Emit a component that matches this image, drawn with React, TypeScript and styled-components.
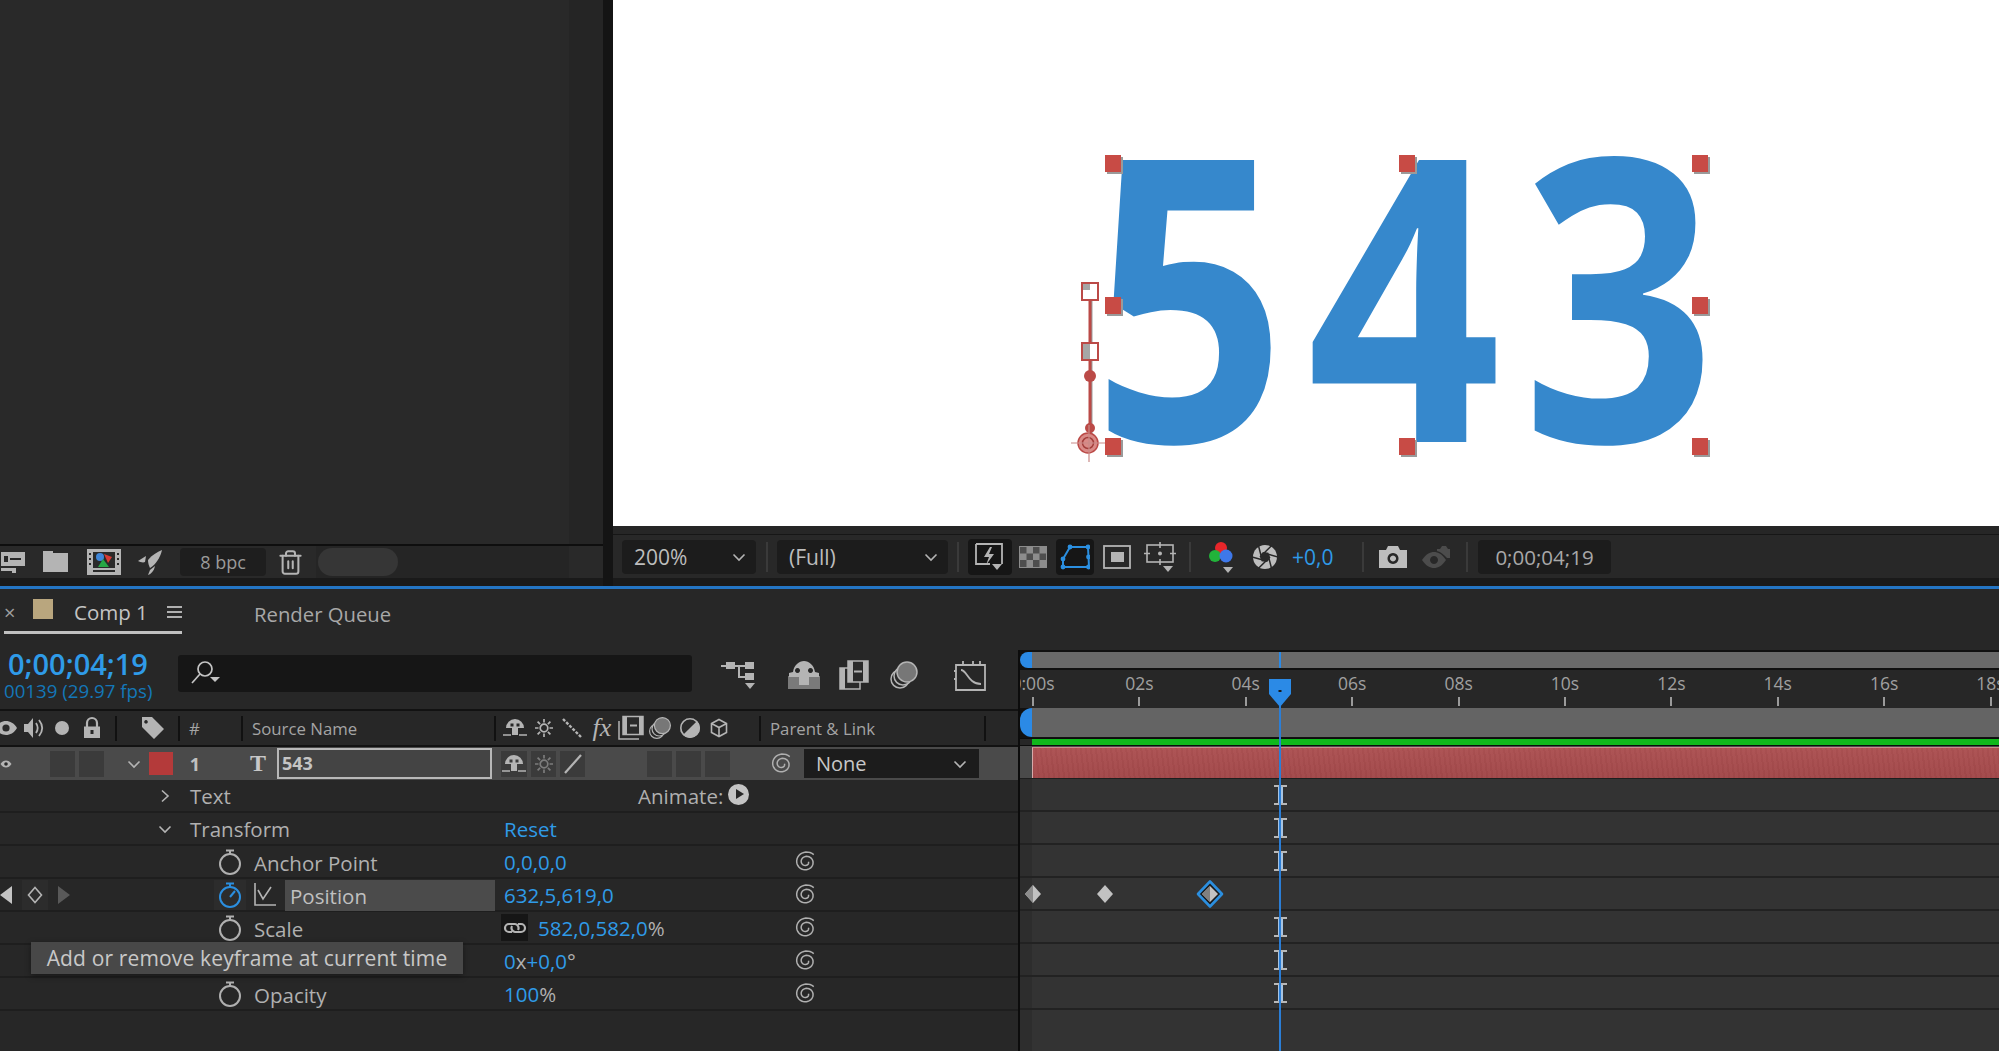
import styled, { createGlobalStyle } from "styled-components";
import { Trash2 } from "lucide-react";

const GlobalStyle = createGlobalStyle`
    html, body {
        margin: 0;
        padding: 0;
        background: #262626;
    }
    * {
        box-sizing: border-box;
    }
`;

const ink = "#b4b4b4";
const blue = "#2f9be8";

// ---------- small drawings ----------

const spiralPath = (() => {
    const pts: string[] = [];
    for (let i = 0; i <= 60; i++) {
        const t = i / 60;
        const angle = -Math.PI / 4 - Math.PI * 3.8 * (1 - t);
        const r = 2.4 + t * 8.6;
        pts.push(`${(12 + r * Math.cos(angle)).toFixed(2)} ${(12 + r * Math.sin(angle) * 0.95).toFixed(2)}`);
    }
    return "M" + pts.join("L");
})();

const Spiral = ({ dim }: { dim?: boolean }) => (
    <svg width="24" height="24" viewBox="0 0 24 24" fill="none" stroke={dim ? "#8d8d8d" : "#b0b0b0"} strokeWidth="1.5">
        <path d={spiralPath} />
    </svg>
);

const bladeLines = Array.from({ length: 6 }, (_, i) => {
    const a = (i * Math.PI) / 3;
    const b = a + (Math.PI * 2) / 3;
    return `M${(13 + 5 * Math.cos(a)).toFixed(2)} ${(13 + 5 * Math.sin(a)).toFixed(2)}L${(13 + 13 * Math.cos(b)).toFixed(2)} ${(13 + 13 * Math.sin(b)).toFixed(2)}`;
}).join("");

const Shutter = () => (
    <svg width="26" height="26" viewBox="0 0 26 26">
        <circle cx="13" cy="13" r="12" fill="#bdbdbd" />
        <path d={bladeLines} stroke="#282828" strokeWidth="1.500" />
        <circle cx="13" cy="13" r="4.800" fill="#282828" />
    </svg>
);

const Stopwatch = ({ active }: { active?: boolean }) => {
    const c = active ? "#2b8fe0" : "#b0b0b0";
    return (
        <svg width="26" height="28" viewBox="0 0 26 28" fill="none" stroke={c} strokeWidth="2">
            <circle cx="13" cy="16" r="10" />
            <path d="M9 2.500h8M13 2.500v4" />
            {active && <path d="M13 16l5-6" />}
        </svg>
    );
};

const GraphGlyph = () => (
    <svg width="24" height="26" viewBox="0 0 24 26" fill="none" stroke={ink} strokeWidth="1.600">
        <path d="M2 1v22h21" />
        <path d="M5 8l5 9 8-12" />
    </svg>
);

const Chevron = ({ dir = "down", size = 14 }: { dir?: "down" | "right"; size?: number }) => (
    <svg width={size} height={size} viewBox="0 0 14 14" fill="none" stroke={ink} strokeWidth="1.600">
        {dir === "down" ? <path d="M1.500 4.500L7 10l5.500-5.500" /> : <path d="M4 1.500L10 7l-6 5.500" />}
    </svg>
);

const Eye = () => (
    <svg width="24" height="16" viewBox="0 0 24 16">
        <path d="M1 8c3-5 7-7 11-7s8 2 11 7c-3 5-7 7-11 7S4 13 1 8z" fill={ink} />
        <circle cx="12" cy="8" r="3.600" fill="#2a2a2a" />
    </svg>
);

const Speaker = () => (
    <svg width="24" height="24" viewBox="0 0 24 24" fill="none">
        <path d="M2 8h4l5-6v20l-5-6H2z" fill={ink} />
        <path d="M14 7c2 3 2 7 0 10M17 4c4 5 4 11 0 16" stroke={ink} strokeWidth="1.800" />
    </svg>
);

const Lock = () => (
    <svg width="20" height="24" viewBox="0 0 20 24" fill="none">
        <path d="M5 11V7a5 5 0 0 1 10 0v4" stroke={ink} strokeWidth="2.200" />
        <path fillRule="evenodd" d="M2 10.500h16V22H2zM8.500 14v4h3v-4z" fill={ink} />
    </svg>
);

const Tag = () => (
    <svg width="26" height="26" viewBox="0 0 26 26">
        <path fillRule="evenodd" d="M2 2h10l12 12-10 10L2 12zM6 5a1.800 1.800 0 1 0 .01 0z" fill={ink} />
    </svg>
);

const Shy = () => (
    <svg width="26" height="22" viewBox="0 0 26 22">
        <path fillRule="evenodd" d="M4 11a9 9 0 0 1 18 0h-6v7h-6v-7zM8.500 6.500h3v3h-3zM14.500 6.500h3v3h-3z" fill={ink} />
        <path d="M1 18h8M17 18h8" stroke={ink} strokeWidth="1.600" />
    </svg>
);

const Sun = ({ dim }: { dim?: boolean }) => (
    <svg width="20" height="20" viewBox="0 0 20 20" fill="none" stroke={dim ? "#7c7c7c" : ink} strokeWidth="1.700">
        <circle cx="10" cy="10" r="3.800" />
        <path d="M10 1v3.500M10 15.500V19M1 10h3.500M15.500 10H19M3.600 3.600l2.500 2.500M13.900 13.900l2.500 2.500M3.600 16.400l2.500-2.500M13.900 6.100l2.500-2.500" />
    </svg>
);

const DottedSlash = () => (
    <svg width="22" height="22" viewBox="0 0 22 22" fill="none" stroke={ink} strokeWidth="2.400">
        <path d="M2 2l18 18" strokeDasharray="3 1.500" />
    </svg>
);

const Slash = () => (
    <svg width="22" height="22" viewBox="0 0 22 22" fill="none" stroke={ink} strokeWidth="2.200">
        <path d="M3 20L19 2" />
    </svg>
);

const Film = () => (
    <svg width="26" height="26" viewBox="0 0 26 26" fill="none" stroke={ink} strokeWidth="1.500">
        <path d="M1 6v18h20" />
        <rect x="5" y="1.500" width="20" height="18" fill="#2a2a2a" />
        <path d="M5 1.500h4v18H5zM21 1.500h4v18h-4z" fill={ink} stroke="none" />
        <path d="M12 10.500h7" strokeWidth="2" />
    </svg>
);

const Blur = () => (
    <svg width="30" height="30" viewBox="0 0 30 30" fill="none" stroke={ink} strokeWidth="1.500">
        <circle cx="11" cy="19" r="9" />
        <circle cx="14" cy="16" r="9" fill="#2a2a2a" />
        <circle cx="18" cy="12" r="10" fill="#777" />
    </svg>
);

const Adjust = () => (
    <svg width="22" height="22" viewBox="0 0 22 22">
        <circle cx="11" cy="11" r="10" fill={ink} />
        <path d="M3.900 18.100A10 10 0 0 1 18.100 3.900z" fill="#2a2a2a" />
        <circle cx="11" cy="11" r="9.200" fill="none" stroke={ink} strokeWidth="1.600" />
    </svg>
);

const Cube = () => (
    <svg width="20" height="20" viewBox="0 0 20 20" fill="none" stroke={ink} strokeWidth="1.600">
        <path d="M10 1.500l7.500 4v9l-7.500 4-7.500-4v-9zM2.500 5.500l7.500 4 7.500-4M10 9.500v9" />
    </svg>
);

const LinkChain = () => (
    <svg width="24" height="14" viewBox="0 0 24 14" fill="none" stroke={ink} strokeWidth="2.200">
        <path d="M9 11H6a4 4 0 0 1 0-8h6a4 4 0 0 1 3 6" />
        <path d="M15 3h3a4 4 0 0 1 0 8h-6a4 4 0 0 1-3-6" />
    </svg>
);

const Diamond = ({ half }: { half?: boolean }) => (
    <svg width="18" height="20" viewBox="0 0 18 20">
        <path d="M9 1l8 9-8 9-8-9z" fill="#c2c2c2" />
        {half && <path d="M9 1L1 10l8 9z" fill="#8c8c8c" />}
    </svg>
);

const SelectedKey = () => (
    <svg width="30" height="30" viewBox="0 0 30 30">
        <path d="M15 2.500L27 15 15 27.500 3 15z" fill="#1b1b1b" stroke="#2b8fe0" strokeWidth="2.600" strokeLinejoin="round" />
        <path d="M15 7l8 8-8 8-8-8z" fill="#c2c2c2" />
        <path d="M15 7l-8 8 8 8z" fill="#808080" />
    </svg>
);

const FastPreview = () => (
    <svg width="32" height="30" viewBox="0 0 32 30" fill="none">
        <path d="M2 2h26v20M2 2v20h14" stroke={ink} strokeWidth="1.800" />
        <path d="M16 5l-6 10h5l-3 8 8-11h-5l3-7z" fill={ink} />
        <path d="M18 22h10l-5 6z" fill={ink} />
    </svg>
);

const Checker = () => (
    <svg width="28" height="22" viewBox="0 0 28 22">
        <rect width="28" height="22" fill="#8c8c8c" />
        <path d="M1 1h6.500v6.500H1zM14 1h6.500v6.500H14zM7.500 7.500H14V14H7.500zM20.500 7.500H27V14h-6.500zM1 14h6.500v7H1zM14 14h6.500v7H14z" fill="#4e4e4e" />
    </svg>
);

const Region = () => (
    <svg width="30" height="26" viewBox="0 0 30 26" fill="none" stroke="#2b8fe0" strokeWidth="2">
        <path d="M10 3h18l1 20H3v-8z" />
        <g fill="#2b8fe0" stroke="none">
            <circle cx="10" cy="3" r="2.400" />
            <circle cx="28" cy="3" r="2.400" />
            <circle cx="28.500" cy="13" r="2.400" />
            <circle cx="28.500" cy="23" r="2.400" />
            <circle cx="3" cy="23" r="2.400" />
            <circle cx="3" cy="15" r="2.400" />
        </g>
    </svg>
);

const MaskFrame = () => (
    <svg width="28" height="24" viewBox="0 0 28 24">
        <rect x="1" y="1" width="26" height="22" fill="none" stroke={ink} strokeWidth="1.800" />
        <rect x="8" y="7" width="13" height="10" fill={ink} />
    </svg>
);

const GuideFrame = () => (
    <svg width="32" height="30" viewBox="0 0 32 30" fill="none" stroke={ink} strokeWidth="1.600">
        <rect x="3" y="3" width="26" height="17" />
        <path d="M16 0v6M16 17v6M0 11.500h6M26 11.500h6" />
        <circle cx="16" cy="11.500" r="1.200" fill={ink} />
        <path d="M19 24h10l-5 6z" fill={ink} stroke="none" />
    </svg>
);

const RgbDots = () => (
    <svg width="28" height="32" viewBox="0 0 28 32">
        <circle cx="13" cy="7" r="6" fill="#e8262a" />
        <circle cx="7" cy="15" r="6" fill="#22b33a" />
        <circle cx="18" cy="15" r="6.500" fill="#3e78ea" />
        <path d="M15 26h10l-5 6z" fill={ink} />
    </svg>
);

const CameraGlyph = () => (
    <svg width="30" height="24" viewBox="0 0 30 24">
        <path fillRule="evenodd" d="M1 5h7l2-4h10l2 4h7v18H1zM15 8a5.500 5.500 0 1 0 .01 0zM15 10.500a3 3 0 1 1-.01 0z" fill="#bdbdbd" />
    </svg>
);

const SnapshotEye = () => (
    <svg width="30" height="26" viewBox="0 0 30 26" fill="#4c4c4c">
        <path fillRule="evenodd" d="M1 16c4-6 8-8 12-8s8 2 12 8c-4 6-8 8-12 8S5 22 1 16zM13 12a4 4 0 1 0 .01 0z" />
        <path fillRule="evenodd" d="M16 5h3l2-3h4l2 3h2v9h-3c-3-3-6-6-10-7z" />
    </svg>
);

const Flowchart = () => (
    <svg width="36" height="32" viewBox="0 0 36 32" fill={ink}>
        <rect x="0" y="6" width="5" height="2" />
        <rect x="5" y="3" width="9" height="7" />
        <rect x="24" y="3" width="9" height="7" />
        <rect x="24" y="14" width="9" height="7" />
        <path d="M14 6h10v2h-5v9h5v2h-7V8h-3z" />
        <path d="M24 24h10l-5 6z" />
    </svg>
);

const ShyLayer = () => (
    <svg width="34" height="30" viewBox="0 0 34 30">
        <rect x="1" y="16" width="32" height="13" fill="#7a7a7a" />
        <path fillRule="evenodd" d="M6 12c1-7 6-11 11-11s10 4 11 11l4 1v4H22v8h-10v-8H2v-4zM10.500 8a2.500 2.500 0 1 0 .01 0zM23.500 8a2.500 2.500 0 1 0 .01 0z" fill={ink} />
    </svg>
);

const FilmStack = () => (
    <svg width="30" height="30" viewBox="0 0 30 30" fill="none" stroke={ink} strokeWidth="1.500">
        <rect x="1" y="8" width="20" height="21" fill="#2a2a2a" />
        <path d="M1 8h5v21H1z" fill={ink} stroke="none" />
        <rect x="9" y="1" width="20" height="21" fill="#2a2a2a" />
        <path d="M9 1h5v21H9zM24 1h5v21h-5z" fill={ink} stroke="none" />
        <path d="M15 11.500h8" strokeWidth="2" />
    </svg>
);

const GraphEditor = () => (
    <svg width="32" height="32" viewBox="0 0 32 32" fill="none" stroke={ink} strokeWidth="1.800">
        <path d="M2 6h29v25H2zM9 2v4M19 2v4M26 2v4M0 12h2M0 20h2" />
        <path d="M7 11c6 0 7 14 20 14" />
    </svg>
);

const Interpret = () => (
    <svg width="24" height="24" viewBox="0 0 24 24" fill={ink}>
        <path fillRule="evenodd" d="M0 2h24v14H0zM3 6v6h4V6zM9 8v2h11V8z" />
        <path d="M0 18h15v5h-4v-2H0z" />
    </svg>
);

const Folder = () => (
    <svg width="27" height="22" viewBox="0 0 27 22" fill={ink}>
        <path d="M1 0h10v2h15v19H1z" />
    </svg>
);

const CompIcon = () => (
    <svg width="34" height="26" viewBox="0 0 34 26">
        <rect width="34" height="26" fill={ink} />
        <rect x="6" y="3" width="22" height="16" fill="#2a2a2a" />
        <path d="M2 4h2v2H2zM2 9h2v2H2zM2 14h2v2H2zM30 4h2v2h-2zM30 9h2v2h-2zM30 14h2v2h-2z" fill="#2a2a2a" />
        <rect x="6" y="21" width="22" height="2" fill="#2a2a2a" />
        <circle cx="13" cy="8" r="4" fill="#3f86d8" />
        <path d="M17 5l8 3-4 6z" fill="#d93a34" />
        <path d="M16 10l6 8H11z" fill="#28a745" />
    </svg>
);

const Rocket = () => (
    <svg width="26" height="26" viewBox="0 0 26 26" fill={ink}>
        <path d="M25 1c-2 8-6 14-12 18-1-2-2-5-2-8 4-5 9-8 14-10z" />
        <path d="M9 7L1 12c2 1 5 2 7 1z" />
        <path d="M13 21l-2 5c3-1 6-4 7-9z" />
    </svg>
);

const SearchGlyph = () => (
    <svg width="34" height="28" viewBox="0 0 34 28" fill="none" stroke="#c4c4c4" strokeWidth="1.700">
        <circle cx="15" cy="10" r="7" />
        <path d="M10 15L2 24" />
        <path d="M20 18h10l-5 5z" fill="#c4c4c4" stroke="none" />
    </svg>
);

// ---------- app ----------

const rulerLabels = ["0:00s", "02s", "04s", "06s", "08s", "10s", "12s", "14s", "16s", "18s"];

export default function App() {
    return (
        <Page>
            <GlobalStyle />
            <TopArea>
                <ProjectPanel>
                    <ProjectBody>
                        <ProjectList />
                        <ProjectSide />
                    </ProjectBody>
                    <ProjectFooter>
                        <Slot $w={26}><Interpret /></Slot>
                        <Slot $w={58}><Folder /></Slot>
                        <Slot $w={39}><CompIcon /></Slot>
                        <Slot $w={54}><Rocket /></Slot>
                        <BpcBox>8 bpc</BpcBox>
                        <Slot $w={48}><Trash2 size={27} color={ink} strokeWidth={1.8} /></Slot>
                        <FooterFill><Pill /></FooterFill>
                        <FooterEnd />
                    </ProjectFooter>
                    <Shelf />
                </ProjectPanel>
                <Gutter />
                <Viewer>
                    <Canvas>
                        <BigNumber>543</BigNumber>
                        <CanvasMarks viewBox="0 0 1386 526" width="1386" height="526">
                            {[492, 786, 1079].flatMap((x) =>
                                [155, 297, 438].map((y) =>
                                    x === 786 && y === 297 ? null : (
                                        <g key={`${x}-${y}`}>
                                            <rect x={x + 2} y={y + 2} width="16" height="17" fill="#9a9a9a" />
                                            <rect x={x} y={y} width="16" height="17" fill="#c84b45" />
                                        </g>
                                    )
                                )
                            )}
                            <path d="M478 290V440" stroke="#9c9c9c" strokeWidth="3" />
                            <path d="M477 290V440" stroke="#bb4a47" strokeWidth="3" />
                            <rect x="469" y="283" width="16" height="17" fill="#fff" stroke="#bb4a47" strokeWidth="2" />
                            <rect x="470" y="284" width="7" height="6" fill="#a6a6a6" />
                            <rect x="469" y="343" width="16" height="17" fill="#fff" stroke="#bb4a47" strokeWidth="2" />
                            <rect x="470" y="344" width="7" height="15" fill="#a6a6a6" />
                            <circle cx="477" cy="376" r="6" fill="#bb4a47" />
                            <circle cx="477" cy="428" r="5" fill="#bb4a47" />
                            <circle cx="475" cy="443" r="10" fill="#d98a87" stroke="#bb4a47" strokeWidth="1.500" />
                            <circle cx="475" cy="443" r="5.500" fill="none" stroke="#a33f3c" strokeWidth="1.500" />
                            <path d="M458 443h34M476 425v37" stroke="#c98a88" strokeWidth="1.200" />
                        </CanvasMarks>
                    </Canvas>
                    <ViewerStrip />
                    <ViewerBar>
                        <Select $w={134} $ml={9}>200%<Chevron /></Select>
                        <Slot $w={21}><Sep /></Slot>
                        <Select $w={171}>(Full)<Chevron /></Select>
                        <Slot $w={20}><Sep /></Slot>
                        <ToggleButton $w={44}><FastPreview /></ToggleButton>
                        <Slot $w={41}><Checker /></Slot>
                        <ToggleButton $w={38} $ml={3}><Region /></ToggleButton>
                        <Slot $w={45}><MaskFrame /></Slot>
                        <Slot $w={42}><GuideFrame /></Slot>
                        <Slot $w={18}><Sep /></Slot>
                        <Slot $w={46}><RgbDots /></Slot>
                        <Slot $w={40}><Shutter /></Slot>
                        <Exposure>+0,0</Exposure>
                        <Slot $w={16}><Sep /></Slot>
                        <Slot $w={44}><CameraGlyph /></Slot>
                        <Slot $w={41}><SnapshotEye /></Slot>
                        <Slot $w={22}><Sep /></Slot>
                        <TimeBox>0;00;04;19</TimeBox>
                    </ViewerBar>
                    <Shelf />
                </Viewer>
            </TopArea>
            <BlueRule />
            <TimelinePanel>
                <TabBar>
                    <ActiveTab>
                        <CloseMark>×</CloseMark>
                        <Swatch />
                        <TabTitle>Comp 1</TabTitle>
                        <Burger />
                    </ActiveTab>
                    <IdleTab>Render Queue</IdleTab>
                </TabBar>
                <TimelineBody>
                    <Outline>
                        <ControlsRow>
                            <TimeBlock>
                                <Timecode>0;00;04;19</Timecode>
                                <FrameCount>00139 (29.97 fps)</FrameCount>
                            </TimeBlock>
                            <SearchField><SearchGlyph /></SearchField>
                            <ToolSlots>
                                <Slot $w={93}><Flowchart /></Slot>
                                <Slot $w={38}><ShyLayer /></Slot>
                                <Slot $w={62}><FilmStack /></Slot>
                                <Slot $w={38}><Blur /></Slot>
                                <Slot $w={94}><GraphEditor /></Slot>
                            </ToolSlots>
                        </ControlsRow>
                        <HeaderRow>
                            <HeaderGroup $w={123} $ml={-8}>
                                <Slot $w={28}><Eye /></Slot>
                                <Slot $w={28}><Speaker /></Slot>
                                <Slot $w={28}><RoundDot /></Slot>
                                <Slot $w={31}><Lock /></Slot>
                            </HeaderGroup>
                            <HeaderGroup $w={63} $rule><Slot $w={72}><Tag /></Slot></HeaderGroup>
                            <HeaderGroup $w={63} $rule><HeaderText>#</HeaderText></HeaderGroup>
                            <HeaderGroup $w={253} $rule><HeaderText>Source Name</HeaderText></HeaderGroup>
                            <HeaderGroup $w={265} $rule>
                                <Slot $w={38}><Shy /></Slot>
                                <Slot $w={20}><Sun /></Slot>
                                <Slot $w={36}><DottedSlash /></Slot>
                                <FxMark>fx</FxMark>
                                <Slot $w={34}><Film /></Slot>
                                <Slot $w={24}><Blur /></Slot>
                                <Slot $w={36}><Adjust /></Slot>
                                <Slot $w={22}><Cube /></Slot>
                            </HeaderGroup>
                            <HeaderGroup $w={227} $rule $endRule><HeaderText>Parent &amp; Link</HeaderText></HeaderGroup>
                        </HeaderRow>
                        <LayerRow>
                            <LayerEye><Eye /></LayerEye>
                            <CellGroup $ml={38}><SwitchCell $w={25} /><SwitchCell $w={25} /></CellGroup>
                            <Slot $w={25} $ml={17}><Chevron /></Slot>
                            <LabelChip $ml={3} />
                            <LayerNumber>1</LayerNumber>
                            <TypeMark>T</TypeMark>
                            <NameBox>543</NameBox>
                            <CellGroup $ml={9}>
                                <SwitchCell $w={26}><Shy /></SwitchCell>
                                <SwitchCell $w={25}><Sun dim /></SwitchCell>
                                <SwitchCell $w={25}><Slash /></SwitchCell>
                            </CellGroup>
                            <CellGroup $ml={62}>
                                <SwitchCell $w={25} /><SwitchCell $w={25} /><SwitchCell $w={25} />
                            </CellGroup>
                            <Slot $w={24} $ml={40}><Spiral /></Slot>
                            <ParentSelect>None<Chevron /></ParentSelect>
                        </LayerRow>
                        <GroupRow>
                            <Slot $w={24} $ml={153}><Chevron dir="right" /></Slot>
                            <RowLabel $w={448} $ml={13}>Text</RowLabel>
                            <RowLabel>Animate:</RowLabel>
                            <PlayBadge />
                        </GroupRow>
                        <GroupRow>
                            <Slot $w={24} $ml={153}><Chevron /></Slot>
                            <RowLabel $w={314} $ml={13}>Transform</RowLabel>
                            <BlueValue>Reset</BlueValue>
                        </GroupRow>
                        <PropertyRow>
                            <Blank />
                            <Slot $w={36}><Stopwatch /></Slot>
                            <PropName>Anchor Point</PropName>
                            <PropValue><BlueValue>0,0,0,0</BlueValue></PropValue>
                            <Slot $w={32}><Spiral /></Slot>
                        </PropertyRow>
                        <PropertyRow>
                            <KeyNav>
                                <NavArrow viewBox="0 0 12 18" width="12" height="18"><path d="M12 0v18L0 9z" fill="#c4c4c4" /></NavArrow>
                                <KeyButton>
                                    <svg width="16" height="18" viewBox="0 0 16 18" fill="none" stroke={ink} strokeWidth="1.600"><path d="M8 1.500L14.500 9 8 16.500 1.500 9z" /></svg>
                                </KeyButton>
                                <NavArrow viewBox="0 0 12 18" width="12" height="18"><path d="M0 0v18l12-9z" fill="#595959" /></NavArrow>
                            </KeyNav>
                            <StopwatchBox><Stopwatch active /></StopwatchBox>
                            <PropName $graph>
                                <GraphGlyph />
                                <HighlightName>Position</HighlightName>
                            </PropName>
                            <PropValue><BlueValue>632,5,619,0</BlueValue></PropValue>
                            <Slot $w={32}><Spiral /></Slot>
                        </PropertyRow>
                        <PropertyRow>
                            <Blank />
                            <Slot $w={36}><Stopwatch /></Slot>
                            <PropName>Scale</PropName>
                            <PropValue $linked>
                                <LinkBox><LinkChain /></LinkBox>
                                <BlueValue>582,0,582,0</BlueValue><Unit>%</Unit>
                            </PropValue>
                            <Slot $w={32}><Spiral /></Slot>
                        </PropertyRow>
                        <PropertyRow>
                            <Blank />
                            <Slot $w={36}><Stopwatch /></Slot>
                            <PropName />
                            <PropValue><BlueValue>0</BlueValue><Unit>x</Unit><BlueValue>+0,0</BlueValue><Unit>°</Unit></PropValue>
                            <Slot $w={32}><Spiral /></Slot>
                        </PropertyRow>
                        <PropertyRow>
                            <Blank />
                            <Slot $w={36}><Stopwatch /></Slot>
                            <PropName>Opacity</PropName>
                            <PropValue><BlueValue>100</BlueValue><Unit>%</Unit></PropValue>
                            <Slot $w={32}><Spiral /></Slot>
                        </PropertyRow>
                        <Tooltip>Add or remove keyframe at current time</Tooltip>
                    </Outline>
                    <PanelDivider />
                    <Graph>
                        <NavRow>
                            <BlueCap />
                            <NavTrack />
                        </NavRow>
                        <Ruler>
                            {rulerLabels.map((label) => (
                                <RulerCell key={label}>
                                    <span>{label}</span>
                                    <RulerTick />
                                </RulerCell>
                            ))}
                        </Ruler>
                        <WorkRow>
                            <BlueCap />
                            <WorkTrack />
                        </WorkRow>
                        <GreenRow />
                        <LayerTrack><RedBar /></LayerTrack>
                        <Track><IBeam /></Track>
                        <Track><IBeam /></Track>
                        <Track><IBeam /></Track>
                        <Track>
                            <KeyMark $x={13}><Diamond half /></KeyMark>
                            <KeyMark $x={85}><Diamond /></KeyMark>
                            <KeyMark $x={190}><SelectedKey /></KeyMark>
                        </Track>
                        <Track><IBeam /></Track>
                        <Track><IBeam /></Track>
                        <Track><IBeam /></Track>
                        <GraphRest />
                        <NavNeedle />
                        <PlayheadLine />
                        <PlayheadHandle viewBox="0 0 22 28" width="22" height="28">
                            <path d="M0 0h22v15L11 28 0 15z" fill="#2b8ae6" />
                            <rect x="9.500" y="11" width="3" height="2" fill="#1a1a1a" />
                        </PlayheadHandle>
                    </Graph>
                </TimelineBody>
            </TimelinePanel>
        </Page>
    );
}

// ---------- shared ----------

const Page = styled.div`
    width: 1999px;
    height: 1051px;
    display: flex;
    flex-direction: column;
    overflow: hidden;
    background: #262626;
    color: #a9a9a9;
    font-family: "Open Sans", "Noto Sans", sans-serif;
    font-size: 20px;
`;

const Slot = styled.div<{ $w: number; $ml?: number }>`
    flex: none;
    width: ${(p) => p.$w}px;
    margin-left: ${(p) => p.$ml ?? 0}px;
    display: flex;
    align-items: center;
    justify-content: center;
`;

const Sep = styled.div`
    width: 2px;
    height: 30px;
    background: #3a3a3a;
`;

const Shelf = styled.div`
    height: 8px;
    flex: none;
    background: #1a1a1a;
`;

// ---------- top area ----------

const TopArea = styled.div`
    height: 586px;
    flex: none;
    display: flex;
`;

const ProjectPanel = styled.div`
    width: 603px;
    flex: none;
    display: flex;
    flex-direction: column;
`;

const ProjectBody = styled.div`
    flex: 1;
    display: flex;
    border-bottom: 2px solid #0e0e0e;
`;

const ProjectList = styled.div`
    width: 569px;
    background: #292929;
`;

const ProjectSide = styled.div`
    flex: 1;
    background: #252525;
`;

const ProjectFooter = styled.div`
    height: 32px;
    flex: none;
    display: flex;
    align-items: center;
    background: #292929;
    overflow: hidden;
`;

const BpcBox = styled.div`
    flex: none;
    width: 86px;
    height: 28px;
    margin-left: 3px;
    border-radius: 4px;
    background: #1e1e1e;
    color: #9a9a9a;
    font-size: 18px;
    display: flex;
    align-items: center;
    justify-content: center;
`;

const FooterFill = styled.div`
    flex: none;
    width: 253px;
    margin-left: 2px;
    height: 100%;
    padding: 2px;
    background: #252525;
`;

const Pill = styled.div`
    width: 80px;
    height: 28px;
    border-radius: 14px;
    background: #363636;
`;

const FooterEnd = styled.div`
    flex: 1;
    height: 100%;
    background: #292929;
`;

const Gutter = styled.div`
    width: 10px;
    flex: none;
    background: #141414;
`;

const Viewer = styled.div`
    flex: 1;
    display: flex;
    flex-direction: column;
`;

const Canvas = styled.div`
    height: 526px;
    flex: none;
    position: relative;
    overflow: hidden;
    background: #fff;
`;

const BigNumber = styled.div`
    position: absolute;
    left: 479px;
    top: 92px;
    font-family: "Open Sans", sans-serif;
    font-weight: 700;
    font-size: 395px;
    line-height: 1;
    letter-spacing: 24px;
    color: #3688cc;
    transform: scaleX(0.86);
    transform-origin: left top;
`;

const CanvasMarks = styled.svg`
    position: absolute;
    left: 0;
    top: 0;
`;

const ViewerStrip = styled.div`
    height: 9px;
    flex: none;
    background: #262626;
    border-bottom: 1px solid #161616;
`;

const ViewerBar = styled.div`
    flex: 1;
    display: flex;
    align-items: center;
    background: #282828;
`;

const Select = styled.div<{ $w: number; $ml?: number }>`
    flex: none;
    width: ${(p) => p.$w}px;
    margin-left: ${(p) => p.$ml ?? 0}px;
    height: 34px;
    padding: 0 10px 0 12px;
    border-radius: 4px;
    background: #1c1c1c;
    color: #bdbdbd;
    font-size: 21px;
    display: flex;
    align-items: center;
    justify-content: space-between;
`;

const ToggleButton = styled.div<{ $w: number; $ml?: number }>`
    flex: none;
    width: ${(p) => p.$w}px;
    margin-left: ${(p) => p.$ml ?? 0}px;
    height: 36px;
    border-radius: 4px;
    background: #161616;
    display: flex;
    align-items: center;
    justify-content: center;
`;

const Exposure = styled.div`
    flex: none;
    width: 70px;
    padding-left: 7px;
    color: ${blue};
    font-size: 21px;
`;

const TimeBox = styled.div`
    flex: none;
    width: 133px;
    height: 34px;
    border-radius: 4px;
    background: #1c1c1c;
    color: #a8a8a8;
    font-size: 20.5px;
    display: flex;
    align-items: center;
    justify-content: center;
`;

const BlueRule = styled.div`
    height: 3px;
    flex: none;
    background: #2475c4;
`;

// ---------- timeline ----------

const TimelinePanel = styled.div`
    flex: 1;
    display: flex;
    flex-direction: column;
    background: #272727;
    min-height: 0;
`;

const TabBar = styled.div`
    height: 61px;
    flex: none;
    display: flex;
    align-items: flex-start;
`;

const ActiveTab = styled.div`
    width: 178px;
    height: 44px;
    margin: 1px 0 0 4px;
    padding-top: 3px;
    display: flex;
    align-items: center;
    border-bottom: 3px solid #c0c0c0;
`;

const CloseMark = styled.span`
    width: 29px;
    color: #a0a0a0;
    font-size: 20px;
    text-align: left;
`;

const Swatch = styled.div`
    width: 20px;
    height: 20px;
    background: #b9a67e;
    margin-top: -6px;
`;

const TabTitle = styled.span`
    margin-left: 21px;
    width: 93px;
    color: #c4c4c4;
    font-size: 20.5px;
`;

const Burger = styled.div`
    width: 15px;
    height: 12px;
    border-top: 2px solid #b0b0b0;
    border-bottom: 2px solid #b0b0b0;
    position: relative;

    &::after {
        content: "";
        position: absolute;
        left: 0;
        right: 0;
        top: 3px;
        height: 2px;
        background: #b0b0b0;
    }
`;

const IdleTab = styled.div`
    margin: 11px 0 0 72px;
    color: #a8a8a8;
    font-size: 20.3px;
`;

const TimelineBody = styled.div`
    flex: 1;
    display: flex;
    min-height: 0;
`;

const Outline = styled.div`
    width: 1018px;
    flex: none;
    position: relative;
    display: flex;
    flex-direction: column;
    overflow: hidden;
`;

const PanelDivider = styled.div`
    width: 2px;
    flex: none;
    background: #0c0c0c;
`;

const ControlsRow = styled.div`
    height: 59px;
    flex: none;
    display: flex;
    align-items: flex-start;
`;

const TimeBlock = styled.div`
    width: 178px;
    flex: none;
    padding: 0 0 0 4px;
    display: flex;
    flex-direction: column;
`;

const Timecode = styled.div`
    margin-left: 4px;
    color: ${blue};
    font-size: 29px;
    font-weight: 600;
    line-height: 28px;
`;

const FrameCount = styled.div`
    color: #1477b8;
    font-size: 18.7px;
    line-height: 25px;
`;

const SearchField = styled.div`
    width: 514px;
    flex: none;
    height: 37px;
    margin-top: 5px;
    padding: 4px 0 0 12px;
    border-radius: 3px;
    background: #161616;
`;

const ToolSlots = styled.div`
    flex: none;
    height: 50px;
    display: flex;
    align-items: center;
`;

const HeaderRow = styled.div`
    height: 38px;
    flex: none;
    display: flex;
    align-items: center;
    border-top: 2px solid #121212;
    border-bottom: 2px solid #121212;
`;

const HeaderGroup = styled.div<{ $w: number; $ml?: number; $rule?: boolean; $endRule?: boolean }>`
    flex: none;
    width: ${(p) => p.$w}px;
    margin-left: ${(p) => p.$ml ?? 0}px;
    height: 25px;
    display: flex;
    align-items: center;
    border-left: ${(p) => (p.$rule ? "2px solid #111" : "none")};
    border-right: ${(p) => (p.$endRule ? "2px solid #111" : "none")};
`;

const HeaderText = styled.span`
    padding-left: 9px;
    color: #a4a4a4;
    font-size: 16.8px;
`;

const RoundDot = styled.div`
    width: 14px;
    height: 14px;
    border-radius: 50%;
    background: ${ink};
`;

const FxMark = styled.span`
    flex: none;
    width: 24px;
    text-align: center;
    font-family: "Liberation Serif", serif;
    font-style: italic;
    font-size: 26px;
    color: ${ink};
`;

const LayerRow = styled.div`
    height: 33px;
    flex: none;
    display: flex;
    align-items: center;
    background: #4a4a4a;
`;

const LayerEye = styled.div`
    flex: none;
    width: 12px;
    overflow: hidden;
    display: flex;
    justify-content: flex-end;
`;

const CellGroup = styled.div<{ $ml?: number }>`
    flex: none;
    margin-left: ${(p) => p.$ml ?? 0}px;
    display: flex;
    gap: 4px;
`;

const SwitchCell = styled.div<{ $w: number }>`
    width: ${(p) => p.$w}px;
    height: 26px;
    background: #3b3b3b;
    display: flex;
    align-items: center;
    justify-content: center;
`;

const LabelChip = styled.div<{ $ml?: number }>`
    flex: none;
    margin-left: ${(p) => p.$ml ?? 0}px;
    width: 24px;
    height: 23px;
    background: #b43a3a;
`;

const LayerNumber = styled.div`
    flex: none;
    width: 44px;
    text-align: center;
    color: #c0c0c0;
    font-weight: 700;
    font-size: 18px;
`;

const TypeMark = styled.div`
    flex: none;
    width: 60px;
    padding-right: 11px;
    text-align: right;
    font-family: "Liberation Serif", serif;
    font-weight: 700;
    font-size: 24px;
    color: #c8c8c8;
`;

const NameBox = styled.div`
    flex: none;
    width: 215px;
    height: 31px;
    padding-left: 3px;
    border: 2px solid #b8b8b8;
    background: #444;
    color: #c4c4c4;
    font-weight: 700;
    font-size: 18px;
    line-height: 26px;
`;

const ParentSelect = styled.div`
    flex: none;
    width: 175px;
    height: 29px;
    padding: 0 12px;
    margin-left: 10px;
    background: #1c1c1c;
    color: #c8c8c8;
    font-size: 20px;
    display: flex;
    align-items: center;
    justify-content: space-between;
`;

const GroupRow = styled.div`
    height: 33px;
    flex: none;
    display: flex;
    align-items: center;
    border-bottom: 2px solid #1e1e1e;
`;

const RowLabel = styled.div<{ $w?: number; $ml?: number }>`
    flex: none;
    width: ${(p) => (p.$w ? `${p.$w}px` : "auto")};
    margin-left: ${(p) => p.$ml ?? 0}px;
    padding-top: 1px;
    color: #b0b0b0;
    font-size: 20.5px;
`;

const PlayBadge = styled.div`
    flex: none;
    width: 21px;
    height: 21px;
    margin: -2px 0 0 5px;
    border-radius: 50%;
    background: #c4c4c4;
    position: relative;

    &::after {
        content: "";
        position: absolute;
        left: 8px;
        top: 5px;
        border-left: 8px solid #272727;
        border-top: 5.5px solid transparent;
        border-bottom: 5.5px solid transparent;
    }
`;

const BlueValue = styled.span`
    color: ${blue};
    font-size: 20.5px;
`;

const Unit = styled.span`
    color: #b0b0b0;
    font-size: 20.5px;
`;

const PropertyRow = styled.div`
    height: 33px;
    flex: none;
    display: grid;
    grid-template-columns: 212px 36px 256px 286px 32px;
    align-items: center;
    border-bottom: 2px solid #1e1e1e;
`;

const Blank = styled.div``;

const PropName = styled.div<{ $graph?: boolean }>`
    padding-left: ${(p) => (p.$graph ? 5 : 6)}px;
    padding-top: ${(p) => (p.$graph ? 0 : 2)}px;
    height: 100%;
    display: flex;
    align-items: center;
    gap: 8px;
    color: #b0b0b0;
    font-size: 20.5px;
`;

const HighlightName = styled.div`
    width: 210px;
    height: 31px;
    padding-left: 5px;
    margin-top: 1px;
    background: #4b4b4b;
    color: #c0c0c0;
    line-height: 32px;
`;

const PropValue = styled.div<{ $linked?: boolean }>`
    margin-left: ${(p) => (p.$linked ? -3 : 0)}px;
    display: flex;
    align-items: center;
`;

const LinkBox = styled.div`
    flex: none;
    width: 27px;
    height: 27px;
    margin-right: 10px;
    background: #161616;
    display: flex;
    align-items: center;
    justify-content: center;
`;

const KeyNav = styled.div`
    display: flex;
    align-items: center;
`;

const NavArrow = styled.svg`
    flex: none;
`;

const KeyButton = styled.div`
    flex: none;
    width: 26px;
    height: 30px;
    margin: 0 10px;
    background: #2c2c2c;
    display: flex;
    align-items: center;
    justify-content: center;
`;

const StopwatchBox = styled.div`
    width: 32px;
    height: 30px;
    margin-left: 2px;
    background: #2c2c2c;
    display: flex;
    align-items: center;
    justify-content: center;
`;

const Tooltip = styled.div`
    position: absolute;
    left: 31px;
    top: 292px;
    width: 432px;
    height: 32px;
    background: #484848;
    color: #c8c8c8;
    font-size: 21px;
    letter-spacing: 0.15px;
    line-height: 32px;
    text-align: center;
    white-space: nowrap;
    box-shadow: 0 2px 6px rgba(0, 0, 0, 0.4);
`;

// ---------- graph ----------

const Graph = styled.div`
    flex: 1;
    min-width: 0;
    position: relative;
    display: flex;
    flex-direction: column;
    overflow: hidden;
`;

const NavRow = styled.div`
    height: 20px;
    flex: none;
    padding: 2px 0;
    display: flex;
    background: #111;
`;

const BlueCap = styled.div`
    width: 12px;
    flex: none;
    background: #2b8ae6;
    border-radius: 12px 0 0 12px;
`;

const NavTrack = styled.div`
    flex: 1;
    background: #6a6a6a;
`;

const NavNeedle = styled.div`
    position: absolute;
    left: 259px;
    top: 2px;
    width: 2px;
    height: 16px;
    background: #2b8ae6;
`;

const Ruler = styled.div`
    height: 38px;
    flex: none;
    display: flex;
    overflow: hidden;
    background: #272727;
`;

const RulerCell = styled.div`
    flex: none;
    width: 106.4px;
    display: flex;
    flex-direction: column;
    align-items: center;
    color: #a0a0a0;
    font-size: 17.5px;

    &:first-child {
        margin-left: -40.2px;
    }

    span {
        line-height: 27px;
    }
`;

const RulerTick = styled.div`
    width: 2px;
    height: 9px;
    background: #9a9a9a;
`;

const WorkRow = styled.div`
    height: 30px;
    flex: none;
    padding-bottom: 1px;
    display: flex;
    background: #111;
`;

const WorkTrack = styled.div`
    flex: 1;
    background: #646464;
`;

const GreenRow = styled.div`
    height: 8px;
    flex: none;
    padding-left: 12px;
    background: #10b81c content-box;
    border-top: 1px solid #0c0c0c;
    border-bottom: 1px solid #0c0c0c;
`;

const LayerTrack = styled.div`
    height: 33px;
    flex: none;
    padding: 1px 0 0 12px;
    background: #4a4a4a;
    border-bottom: 1px solid #1e1e1e;
`;

const RedBar = styled.div`
    height: 100%;
    background:
        repeating-linear-gradient(83deg, rgba(0, 0, 0, 0.025) 0 2px, rgba(255, 255, 255, 0.015) 2px 5px),
        linear-gradient(#ad5253, #a2484a);
    border-top: 1px solid #c98b8b;
    border-left: 1px solid #d6aaaa;
`;

const Track = styled.div`
    height: 33px;
    flex: none;
    position: relative;
    background: linear-gradient(90deg, #2d2d2d 12px, #333 12px);
    border-bottom: 2px solid #222;
`;

const GraphRest = styled.div`
    flex: 1;
    background: linear-gradient(90deg, #2d2d2d 12px, #333 12px);
`;

const KeyMark = styled.div<{ $x: number }>`
    position: absolute;
    left: ${(p) => p.$x}px;
    top: 50%;
    transform: translate(-50%, -50%);
    display: flex;
`;

const IBeam = styled.div`
    position: absolute;
    left: 254px;
    top: 6px;
    width: 13px;
    height: 20px;
    border-top: 2px solid #b8b8b8;
    border-bottom: 2px solid #b8b8b8;

    &::after {
        content: "";
        position: absolute;
        left: 4px;
        top: 0;
        width: 5px;
        height: 16px;
        background: #a9c4e0;
    }
`;

const PlayheadLine = styled.div`
    position: absolute;
    left: 259px;
    top: 56px;
    bottom: 0;
    width: 2px;
    background: #2b7ed6;
`;

const PlayheadHandle = styled.svg`
    position: absolute;
    left: 249px;
    top: 29px;
`;
